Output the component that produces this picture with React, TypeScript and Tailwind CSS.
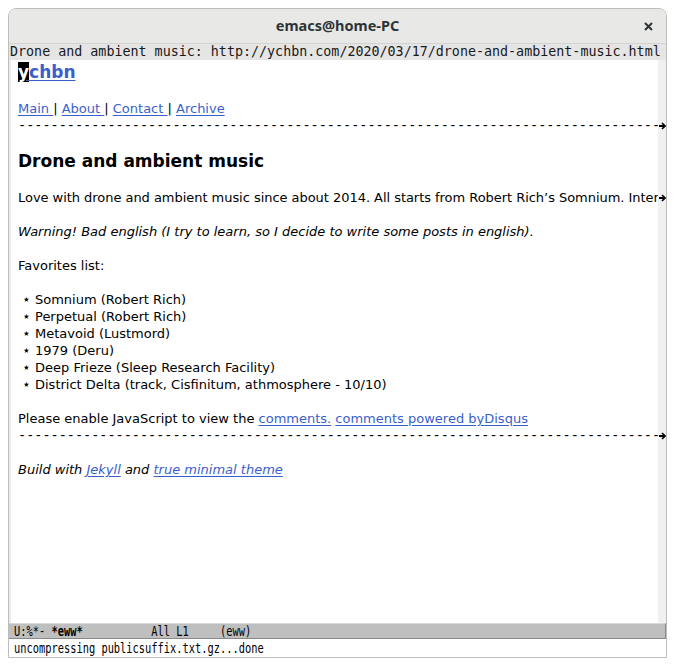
import React from "react";

const sans = "font-['DejaVu_Sans',sans-serif]";
const mono = "font-['DejaVu_Sans_Mono',monospace]";
const link = "text-[#3a5fcd] underline underline-offset-[2px]";

function Arrow() {
  return (
    <svg width="7" height="8" viewBox="0 0 7 8" className="ml-[1px]">
      <path d="M0 4h5.5" stroke="#000" strokeWidth="2" />
      <path d="M3 1l3 3-3 3" stroke="#000" strokeWidth="1.6" fill="none" />
    </svg>
  );
}

function Row({
  h = "h-[17px] leading-[17px]",
  arrow = false,
  children,
  cls = "",
}: {
  h?: string;
  arrow?: boolean;
  children?: React.ReactNode;
  cls?: string;
}) {
  return (
    <div className={`flex ${h}`}>
      <div className={`w-[647px] overflow-hidden whitespace-nowrap pl-[7px] ${cls}`}>{children}</div>
      <div className="w-[8px] bg-[#f0f0f0] flex items-center">{arrow && <Arrow />}</div>
    </div>
  );
}

function Hr() {
  return (
    <Row arrow cls={`${mono} text-[13.5px]`}>
      {"-".repeat(90)}
    </Row>
  );
}

const items = [
  "Somnium (Robert Rich)",
  "Perpetual (Robert Rich)",
  "Metavoid (Lustmord)",
  "1979 (Deru)",
  "Deep Frieze (Sleep Research Facility)",
  "District Delta (track, Cisfinitum, athmosphere - 10/10)",
];

export default function App() {
  return (
    <div className="w-[676px] h-[667px] bg-white pt-[8px] pl-[8px]">
      <div className="w-[659px] h-[650px] border border-[#bdbdbb] rounded-t-[8px] flex flex-col overflow-hidden">
        {/* title bar */}
        <div className="h-[35px] bg-[#e8e8e7] border-b border-[#d3d3d0] flex items-center shrink-0">
          <div className="w-[36px]" />
          <div className="flex-1 text-center font-['Noto_Sans',sans-serif] font-bold text-[14.5px] text-[#2e3436]">
            emacs@home-PC
          </div>
          <div className="w-[36px] flex items-center justify-end pr-[13px]">
            <svg width="9" height="9" viewBox="0 0 9 9">
              <path d="M1 1l7 7M8 1l-7 7" stroke="#2e3436" strokeWidth="2" />
            </svg>
          </div>
        </div>
        {/* header line */}
        <div className={`h-[16px] leading-[16px] bg-[#e5e5e5] ${mono} text-[13.35px] text-[#1a1a1a] whitespace-nowrap overflow-hidden shrink-0 pl-[1px]`}>
          Drone and ambient music: http://ychbn.com/2020/03/17/drone-and-ambient-music.html
        </div>
        {/* body */}
        <div className={`flex-1 flex ${sans} text-[13px] text-black bg-white`}>
          <div className="w-[2px] bg-[#ececec]" />
          <div className="flex flex-col flex-1">
            <Row h="h-[23px] leading-[24px]" cls="text-[17px] font-bold">
              <a className={link}>
                <span className="bg-black text-white">y</span>chbn
              </a>
            </Row>
            <Row />
            <Row>
              <a className={link}>Main </a>| <a className={link}>About </a>| <a className={link}>Contact </a>|{" "}
              <a className={link}>Archive </a>
            </Row>
            <Hr />
            <Row />
            <Row h="h-[21px] leading-[21px]" cls="text-[17px] font-bold">
              Drone and ambient music
            </Row>
            <Row />
            <Row arrow cls="tracking-[-0.04px]">
              Love with drone and ambient music since about 2014. All starts from Robert Rich’s Somnium. Interesting
              sound and atmosphere.
            </Row>
            <Row />
            <Row cls="italic">
              Warning! Bad english (I try to learn, so I decide to write some posts in english).
            </Row>
            <Row />
            <Row>Favorites list:</Row>
            <Row />
            {items.map((it) => (
              <Row key={it}>
                <span className="inline-block w-[17px] text-center text-[14px] leading-[17px]">⋆</span>
                {it}
              </Row>
            ))}
            <Row />
            <Row>
              Please enable JavaScript to view the <a className={link}>comments.</a>{" "}
              <a className={link}>comments powered byDisqus</a>
            </Row>
            <Hr />
            <Row />
            <Row cls="italic">
              Build with <a className={link}>Jekyll</a> and <a className={link}>true minimal theme</a>
            </Row>
            <div className="flex flex-1">
              <div className="w-[647px]" />
              <div className="w-[8px] bg-[#f0f0f0]" />
            </div>
          </div>
        </div>
        {/* mode line */}
        <div className="h-[16px] bg-[#bfbfbf] border-r border-b border-[#8a8a8a] border-t-[#d9d9d9] border-t shrink-0 flex items-center pl-[5px] overflow-hidden">
          <span className={`inline-block origin-left scale-x-[0.715] whitespace-pre ${mono} text-[14.5px] leading-[14px] text-black`}>
            {"U:%*- "}
            <b>*eww*</b>
            {"           All L1     (eww)"}
          </span>
        </div>
        {/* echo area */}
        <div className="h-[18px] bg-white flex items-center pl-[5px] shrink-0 overflow-hidden">
          <span className={`inline-block origin-left scale-x-[0.715] whitespace-pre ${mono} text-[14.5px] leading-[16px] text-black`}>
            uncompressing publicsuffix.txt.gz...done
          </span>
        </div>
      </div>
    </div>
  );
}
